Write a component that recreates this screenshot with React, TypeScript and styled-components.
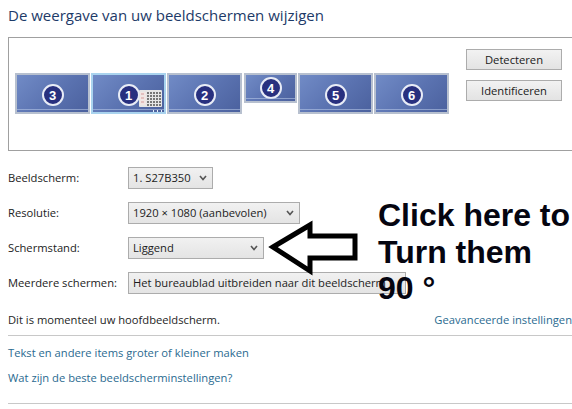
import React from "react";
import styled, { createGlobalStyle } from "styled-components";

const Global = createGlobalStyle`
  html, body { margin: 0; padding: 0; background: #fff; }
  body { width: 572px; height: 409px; overflow: hidden; font-family: "Open Sans", "Liberation Sans", sans-serif; font-size: 11.2px; color: #1e1e1e; }
`;
const Page = styled.div`
  position: relative; width: 572px; height: 409px; overflow: hidden; padding-left: 8px; box-sizing: border-box;
`;
const Title = styled.h1`
  margin: 0; padding-top: 4px; height: 37px; box-sizing: border-box; font-size: 15px; line-height: 22px; font-weight: 400; color: #1d3a68; white-space: nowrap;
`;
const Panel = styled.section`
  display: flex; width: 600px; height: 114px; box-sizing: border-box; border: 1px solid #a0a0a0; border-right: none;
`;
const Layout = styled.div`
  display: flex; align-items: flex-start; gap: 1px; width: 457px; padding: 35px 0 0 6px; box-sizing: border-box;
`;
const Monitor = styled.div<{ $small?: boolean; $selected?: boolean }>`
  position: relative; display: flex; justify-content: center; box-sizing: border-box; flex: none;
  width: ${p => (p.$small ? 53 : 75)}px; height: ${p => (p.$small ? 30 : 41)}px; padding-top: ${p => (p.$small ? 2 : 9)}px;
  margin-left: ${p => (p.$small ? 1 : 0)}px;
  background: linear-gradient(135deg, #718bc6 0%, #5a72b0 55%, #4b619e 100%);
  border: 2px solid ${p => (p.$selected ? "#a9d3ee" : "#b7c0cf")};
  &::after { content: ""; position: absolute; left: 0; right: 0; bottom: 2px; height: 1px; background: rgba(190, 205, 235, 0.55); }
`;
const Badge = styled.span`
  width: 22px; height: 22px; box-sizing: border-box; border-radius: 50%; background: #28307f; border: 2px solid #e8ecf6;
  display: flex; align-items: center; justify-content: center; color: #fff; font: 700 13px/1 "Liberation Sans", sans-serif;
`;
const Keypad = styled.svg`
  position: absolute; left: 46px; top: 15px; width: 23px; height: 17px;
`;
const Dots = styled.span`
  position: absolute; right: 2px; bottom: 0; width: 9px; height: 2px;
  background: repeating-linear-gradient(90deg, #e8f0fa 0 1px, transparent 1px 4px);
`;
const Side = styled.div`
  display: flex; flex-direction: column; gap: 10px; padding: 11px 0 0 0;
`;
const Btn = styled.button`
  width: 96px; height: 21px; padding: 0; box-sizing: border-box; border: 1px solid #acacac; border-radius: 0;
  background: linear-gradient(#f2f2f2, #e3e3e3); color: #1a1a1a; font: inherit; line-height: 17px;
`;
const Form = styled.div`
  display: flex; flex-direction: column; gap: 13px; padding-top: 16px;
`;
const Row = styled.div`
  display: grid; grid-template-columns: 120px auto; align-items: center; height: 22px;
`;
const Label = styled.label`
  white-space: nowrap; color: #222; padding-bottom: 2px;
`;
const Select = styled.div<{ $width: number }>`
  display: flex; align-items: center; justify-content: space-between; width: ${p => p.$width}px; height: 22px; padding: 0 5px 2px 4px;
  box-sizing: border-box; border: 1px solid #acacac; background: linear-gradient(#f1f1f1, #e4e4e4); color: #1c1c1c; white-space: nowrap; overflow: hidden;
`;
const Chevron = styled.svg`
  width: 8px; height: 6px; flex: none; margin: 2px 0 0 8px;
`;
const Status = styled.div`
  display: flex; justify-content: space-between; width: 564px; margin-top: 15px; height: 26px; line-height: 22px; box-sizing: border-box;
`;
const Link = styled.a`
  color: #2a6a90; white-space: nowrap; display: block;
`;
const Rule = styled.hr`
  margin: 0; border: none; border-top: 1px solid #c8c8c8; width: 564px;
`;
const Links = styled.div`
  display: flex; flex-direction: column; gap: 10px; padding-top: 9px; height: 67px; box-sizing: border-box;
`;
const Callout = styled.div`
  position: absolute; left: 378px; top: 197px; font: 700 32px/36.5px "Liberation Sans", Arial, sans-serif; color: #050510; white-space: nowrap;
`;
const Arrow = styled.svg`
  position: absolute; left: 268px; top: 220px; width: 92px; height: 56px;
`;

const Chev = () => (
  <Chevron viewBox="0 0 8 6"><path d="M1 1l3 3.5L7 1" fill="none" stroke="#555" strokeWidth="1.6" /></Chevron>
);

export default function App() {
  return (
    <Page>
      <Global />
      <Title>De weergave van uw beeldschermen wijzigen</Title>
      <Panel>
        <Layout>
          <Monitor><Badge>3</Badge></Monitor>
          <Monitor $selected>
            <Badge>1</Badge>
            <Keypad viewBox="0 0 23 17">
              <rect width="23" height="17" rx="1" fill="#e6e6e6" />
              <rect x="1" y="2" width="6" height="13" fill="#f1e6e4" />
              <path d="M2 4h3M2 8h3M2 12h3" stroke="#d59a9a" strokeWidth="1" />
              <path d="M8 3h14M8 6h14M8 9h14M8 12h14M8 15h14" stroke="#777" strokeWidth="2" strokeDasharray="2 1" />
            </Keypad>
            <Dots />
          </Monitor>
          <Monitor><Badge>2</Badge></Monitor>
          <Monitor $small><Badge>4</Badge></Monitor>
          <Monitor><Badge>5</Badge></Monitor>
          <Monitor><Badge>6</Badge></Monitor>
        </Layout>
        <Side>
          <Btn>Detecteren</Btn>
          <Btn>Identificeren</Btn>
        </Side>
      </Panel>
      <Form>
        <Row><Label>Beeldscherm:</Label><Select $width={85}>1. S27B350<Chev /></Select></Row>
        <Row><Label>Resolutie:</Label><Select $width={172}>1920 × 1080 (aanbevolen)<Chev /></Select></Row>
        <Row><Label>Schermstand:</Label><Select $width={136}>Liggend<Chev /></Select></Row>
        <Row><Label>Meerdere schermen:</Label><Select $width={278}>Het bureaublad uitbreiden naar dit beeldscherm</Select></Row>
      </Form>
      <Status>
        <span>Dit is momenteel uw hoofdbeeldscherm.</span>
        <Link>Geavanceerde instellingen</Link>
      </Status>
      <Rule />
      <Links>
        <Link>Tekst en andere items groter of kleiner maken</Link>
        <Link>Wat zijn de beste beeldscherminstellingen?</Link>
      </Links>
      <Rule />
      <Arrow viewBox="0 0 92 56">
        <path d="M5 27 L42 5 V16 H87 V38 H42 V51 Z" fill="#fff" stroke="#000" strokeWidth="5" strokeLinejoin="miter" />
      </Arrow>
      <Callout>Click here to<br />Turn them<br />90 °</Callout>
    </Page>
  );
}
